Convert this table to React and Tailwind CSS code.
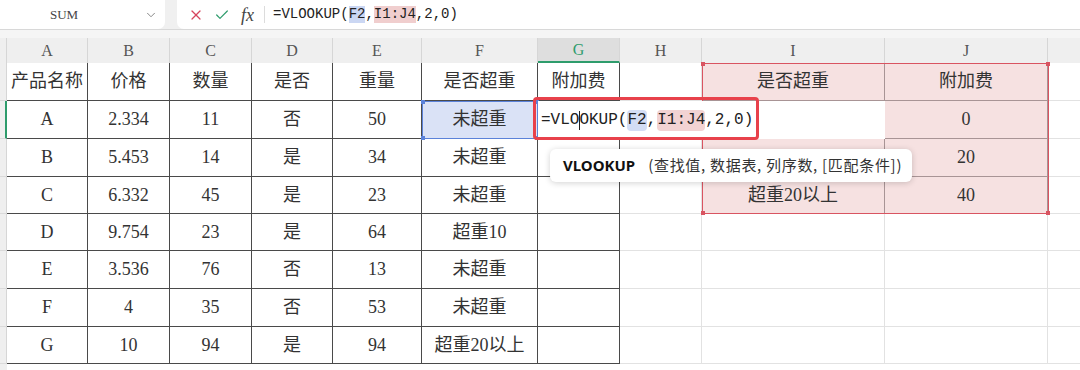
import { X, Check, ChevronDown } from 'lucide-react';

const colW = ['w-[81px]', 'w-[82px]', 'w-[82px]', 'w-[81px]', 'w-[89px]', 'w-[116px]', 'w-[82px]', 'w-[82px]', 'w-[183px]', 'w-[163px]'];
const letters = ['A', 'B', 'C', 'D', 'E', 'F', 'G', 'H', 'I', 'J'];
const rowH = ['h-[38px]', 'h-[38px]', 'h-[38px]', 'h-[37px]', 'h-[37px]', 'h-[38px]', 'h-[38px]', 'h-[37px]'];

// I2 and I3 sit under the editor and the tooltip, so they stay empty here
const rows = [
  ['产品名称', '价格', '数量', '是否', '重量', '是否超重', '附加费', '', '是否超重', '附加费'],
  ['A', '2.334', '11', '否', '50', '未超重', '', '', '', '0'],
  ['B', '5.453', '14', '是', '34', '未超重', '', '', '', '20'],
  ['C', '6.332', '45', '是', '23', '未超重', '', '', '超重20以上', '40'],
  ['D', '9.754', '23', '是', '64', '超重10', '', '', '', ''],
  ['E', '3.536', '76', '否', '13', '未超重', '', '', '', ''],
  ['F', '4', '35', '否', '53', '未超重', '', '', '', ''],
  ['G', '10', '94', '是', '94', '超重20以上', '', '', '', ''],
];

const cellClass = (r, c) => {
  if (c < 7) {
    const bg = r === 1 && c === 5 ? 'bg-[#dae2f6]' : 'bg-white';
    return `${bg} border-r border-b border-[#4a4a4a]`;
  }
  if (c >= 8 && r < 4) return 'bg-[#f6e1e1] border-r border-b border-[#a89495]';
  return 'bg-white border-r border-b border-[#e2e2e2]';
};

const Corner = ({ className }) => <span className={`absolute w-[4px] h-[4px] ${className}`} />;

export default function App() {
  return (
    <div className="relative w-[1080px] h-[370px] overflow-hidden bg-white font-['Liberation_Serif','Noto_Sans_CJK_SC',serif] text-[#333]">
      {/* toolbar */}
      <div className="flex h-[30px] bg-[#f0f0f0] border-b border-[#d8d8d8]">
        <div className="w-[165px] h-[29px] bg-white rounded-br-[7px] flex items-center">
          <span className="ml-[50px] text-[13px] text-[#444]">SUM</span>
          <ChevronDown className="ml-auto mr-[7px] w-[14px] h-[14px] text-[#777]" strokeWidth={1.5} />
        </div>
        <div className="ml-[12px] flex-1 h-[29px] bg-white rounded-bl-[7px] flex items-center">
          <X className="ml-[11px] w-[16px] h-[16px] text-[#d6455e]" strokeWidth={1.8} />
          <Check className="ml-[10px] w-[16px] h-[16px] text-[#2e9c6c]" strokeWidth={1.8} />
          <span className="ml-[11px] italic text-[18px] text-[#444] leading-none">fx</span>
          <span className="ml-[10px] w-px h-[17px] bg-[#dcdcdc]" />
          <span className="ml-[8px] font-['Liberation_Mono',monospace] text-[14px] text-[#222] flex items-center">
            =VLOOKUP(
            <span className="bg-[#cbd7f3] h-[17px] leading-[17px]">F2</span>,
            <span className="bg-[#f0cece] h-[17px] leading-[17px]">I1:J4</span>,2,0)
          </span>
        </div>
      </div>
      <div className="h-[8px] bg-[#f5f5f5]" />

      {/* column headers */}
      <div className="flex h-[25px] bg-[#efefef]">
        <div className="w-[7px] border-r border-[#d6d6d6]" />
        {letters.map((l, i) => (
          <div
            key={l}
            className={`${colW[i]} flex items-center justify-center text-[16px] border-r border-[#d6d6d6] ${
              i === 6 ? 'bg-[#dedede] text-[#2e9c6c] border-b-2 border-b-[#2e9c6c]' : 'text-[#555]'
            }`}
          >
            {l}
          </div>
        ))}
        <div className="flex-1" />
      </div>

      {/* grid */}
      {rows.map((row, r) => (
        <div key={r} className={`flex ${rowH[r]}`}>
          <div
            className={`w-[7px] bg-[#efefef] border-b border-[#dadada] ${
              r === 1 ? 'border-r-2 border-r-[#2e9c6c]' : 'border-r border-r-[#d6d6d6]'
            }`}
          />
          {row.map((v, c) => (
            <div key={c} className={`${colW[c]} ${cellClass(r, c)} flex items-center justify-center text-[18px]`}>
              {v}
            </div>
          ))}
          <div className="flex-1 border-b border-[#e2e2e2]" />
        </div>
      ))}
      <div className="flex h-[6px]">
        <div className="w-[7px] bg-[#efefef]" />
      </div>

      {/* F2 reference highlight */}
      <div className="absolute left-[422px] top-[101px] w-[116px] h-[38px] border border-[#5b82d9]">
        <Corner className="-left-[2px] -top-[2px] bg-[#5b82d9]" />
        <Corner className="-right-[2px] -top-[2px] bg-[#5b82d9]" />
        <Corner className="-left-[2px] -bottom-[2px] bg-[#5b82d9]" />
        <Corner className="-right-[2px] -bottom-[2px] bg-[#5b82d9]" />
      </div>

      {/* I1:J4 reference highlight */}
      <div className="absolute left-[702px] top-[63px] w-[347px] h-[151px] border border-[#d95461]">
        <Corner className="-left-[2px] -top-[2px] bg-[#d95461]" />
        <Corner className="-right-[2px] -top-[2px] bg-[#d95461]" />
        <Corner className="-left-[2px] -bottom-[2px] bg-[#d95461]" />
        <Corner className="-right-[2px] -bottom-[2px] bg-[#d95461]" />
      </div>

      {/* in-cell editor */}
      <div className="absolute left-[538px] top-[101px] w-[347px] h-[38px] bg-white flex items-center pl-[3px] font-['Liberation_Mono',monospace] text-[16px] text-[#222]">
        =VLO<span className="inline-block w-px -mr-px h-[19px] bg-[#222]" />OKUP(
        <span className="bg-[#d3ddf5] rounded-[4px] h-[21px] leading-[21px]">F2</span>,
        <span className="ml-[1px] bg-[#f2d3d3] rounded-[4px] h-[21px] leading-[21px]">I1:J4</span>,2,0)
      </div>
      <div className="absolute left-[538px] top-[137px] w-[82px] h-[2px] bg-[#2e9c6c]" />

      {/* annotation box */}
      <div className="absolute left-[533px] top-[97px] w-[226px] h-[43px] border-[3px] border-[#e8414b] rounded-[4px]" />

      {/* function tooltip */}
      <div className="absolute left-[550px] top-[149px] w-[362px] h-[33px] bg-white rounded-[6px] shadow-[0_1px_6px_rgba(0,0,0,0.18)] flex items-center pl-[13px]">
        <span className="font-['Noto_Sans','Noto_Sans_CJK_SC',sans-serif] font-bold text-[15px] text-[#111]">VLOOKUP</span>
        <span className="ml-[13px] font-['Noto_Sans_CJK_SC',sans-serif] text-[15px] tracking-[0.7px] text-[#333]">
          (查找值, 数据表, 列序数, [匹配条件])
        </span>
      </div>
    </div>
  );
}
